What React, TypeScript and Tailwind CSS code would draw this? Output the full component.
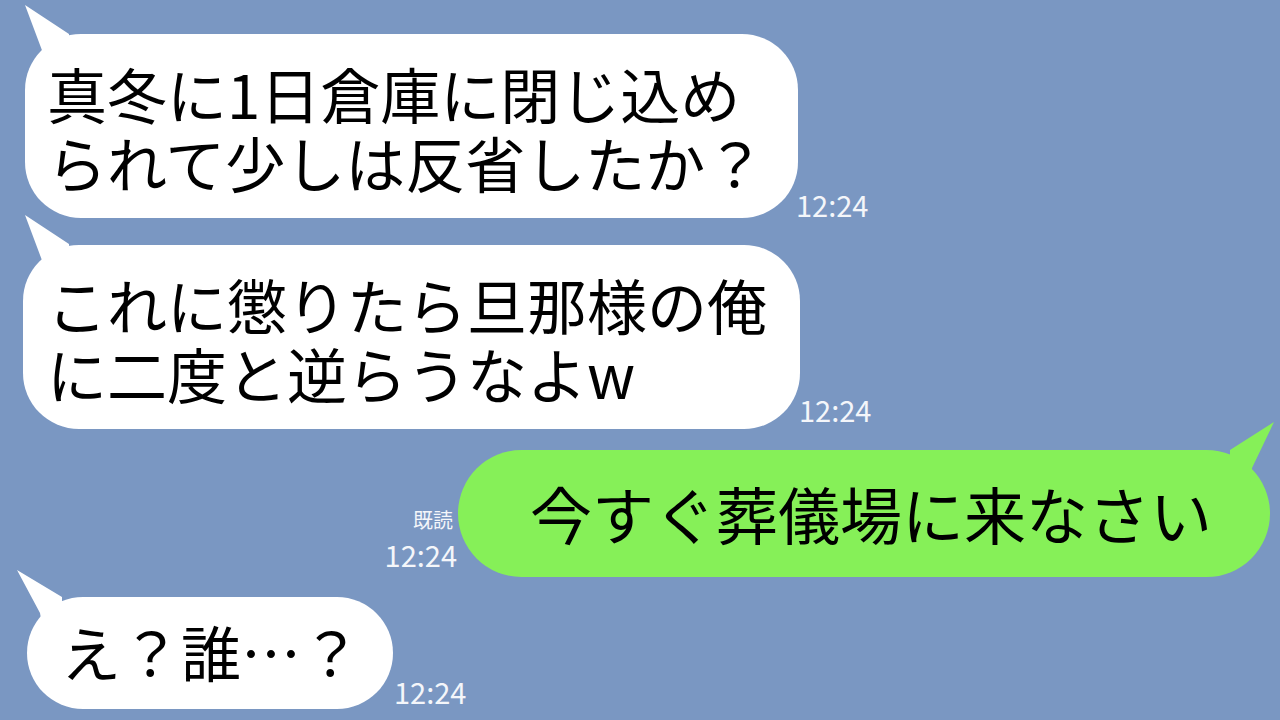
import React from 'react';

const font = { fontFamily: '"Noto Sans CJK JP", "Noto Sans", sans-serif' };

const LeftTail: React.FC<{ className: string }> = ({ className }) => (
    <svg className={className} width="50" height="64" viewBox="0 0 50 64">
        <polygon points="0,0 44,29 44,64 22,64 18,48" fill="#ffffff" />
    </svg>
);

const Time: React.FC<{ className?: string; read?: boolean }> = ({ className = '', read }) => (
    <div className={`flex flex-col items-end text-[#f4f6fa] ${className}`}>
        {read && <span className="text-[20px] leading-none mb-[10px] mr-[4px]">既読</span>}
        <span className="text-[29px] leading-none">12:24</span>
    </div>
);

export default function App() {
    return (
        <div style={font} className="w-[1280px] h-[720px] overflow-hidden bg-[#7a97c2] flex flex-col pt-[34px] text-black">
            <div className="flex items-end pl-[25px]">
                <div className="relative w-[773px] h-[184px] bg-white rounded-[56px] pl-[22px] pt-[24px]">
                    <LeftTail className="absolute left-0 top-[-29px]" />
                    <p className="relative text-[60px] leading-[69px] whitespace-nowrap">
                        真冬に1日倉庫に閉じ込め<br />られて少しは反省したか？
                    </p>
                </div>
                <Time className="mb-[-1px] ml-[-2px]" />
            </div>

            <div className="flex items-end pl-[23px] mt-[27px]">
                <div className="relative w-[777px] h-[184px] bg-white rounded-[56px] pl-[24px] pt-[24px]">
                    <LeftTail className="absolute left-[2px] top-[-30px]" />
                    <p className="relative text-[60px] leading-[69px] whitespace-nowrap">
                        これに懲りたら旦那様の俺<br />に二度と逆らうなよw
                    </p>
                </div>
                <Time className="mb-[5px] ml-[-1px]" />
            </div>

            <div className="flex items-end justify-end pr-[10px] mt-[21px]">
                <Time read className="mb-[8px] mr-[1px]" />
                <div className="relative w-[812px] h-[127px] bg-[#86f058] rounded-[64px] flex items-center pl-[72px]">
                    <svg className="absolute right-[-4px] top-[-28px]" width="48" height="60" viewBox="0 0 48 60">
                        <polygon points="48,0 26,46 24,60 4,60 4,28" fill="#86f058" />
                    </svg>
                    <p className="relative text-[62px] leading-[69px] whitespace-nowrap">今すぐ葬儀場に来なさい</p>
                </div>
            </div>

            <div className="flex items-end pl-[27px] mt-[20px]">
                <div className="relative w-[366px] h-[112px] bg-white rounded-[56px] flex items-center pl-[34px] pb-[5px]">
                    <svg className="absolute left-[-10px] top-[-27px]" width="50" height="60" viewBox="0 0 50 60">
                        <polygon points="0,0 45,27 45,60 26,60 23,43" fill="#ffffff" />
                    </svg>
                    <p className="relative text-[60px] leading-[69px] whitespace-nowrap">え？誰…？</p>
                </div>
                <Time className="mb-[3px] ml-[1px]" />
            </div>
        </div>
    );
}
